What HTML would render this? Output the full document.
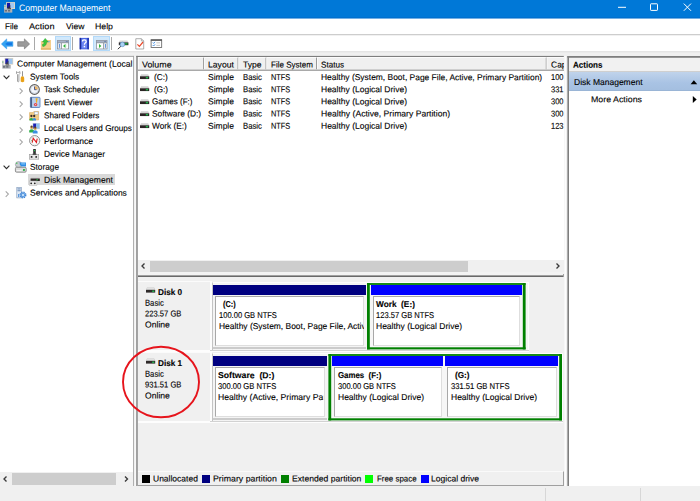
<!DOCTYPE html>
<html><head><meta charset="utf-8"><title>Computer Management</title>
<style>
*{box-sizing:border-box;margin:0;padding:0}
html,body{width:700px;height:501px;overflow:hidden;background:#f0f0f0}
body{position:relative;font-family:"Liberation Sans",sans-serif;font-size:8.5px;color:#000}
.a{position:absolute}
.t{position:absolute;white-space:pre;-webkit-text-stroke:0.12px currentColor;line-height:12px;height:12px;transform-origin:0 50%}
.b{font-weight:bold}
svg{position:absolute;overflow:visible}
</style></head><body>
<!-- title bar -->
<div class="a" style="left:0;top:0;width:700px;height:18px;background:#0078d7"></div>
<div class="a" style="left:0;top:17px;width:700px;height:1px;background:#0070cf"></div>
<div class="a" style="left:0;top:18px;width:700px;height:1px;background:#73afe4"></div>
<svg style="left:600px;top:0" width="100" height="18"><g stroke="#fff" stroke-width="1" fill="none">
<path d="M18 7.3H26"/><rect x="50.5" y="3.8" width="7" height="6.6" rx="0.6"/><path d="M83.8 3.6L91 10.8M91 3.6L83.8 10.8"/></g></svg>
<!-- menu bar -->
<div class="a" style="left:0;top:19px;width:700px;height:15px;background:#fff"></div>
<div class="a" style="left:0;top:34px;width:700px;height:1px;background:#cdcdcd"></div>
<!-- toolbar -->
<div class="a" style="left:0;top:35px;width:700px;height:16px;background:#fff;border-top:1px solid #f1f1f1"></div>
<div class="a" style="left:0;top:51px;width:700px;height:2px;background:linear-gradient(#e2e2e2,#eeeeee)"></div>
<div class="a" style="left:54.6px;top:35.7px;width:16.3px;height:15.2px;background:#d1e8fb;border:1px solid #b3dafa"></div>
<div class="a" style="left:93.1px;top:35.7px;width:16.6px;height:15.2px;background:#d1e8fb;border:1px solid #b3dafa"></div>
<div class="a" style="left:33.7px;top:37px;width:1px;height:12.7px;background:#a9a9a9"></div>
<div class="a" style="left:72.3px;top:37px;width:1px;height:12.7px;background:#a9a9a9"></div>
<div class="a" style="left:111.2px;top:37px;width:1px;height:12.7px;background:#a9a9a9"></div>
<svg style="left:0;top:35px" width="170" height="17">
<path d="M1.4 9L6.7 3.9V6.7H12.9V11.3H6.7V13.9Z" fill="#33a3f2" stroke="#2b90e4" stroke-width="0.5"/><path d="M5 9L7.4 7.6H12V10.2H7.4Z" fill="#1578e4"/>
<path d="M29.6 9L24.4 3.9V6.7H17.7V11.3H24.4V13.9Z" fill="#9b9b9b" stroke="#6e6e6e" stroke-width="0.6"/>
<path d="M40.9 6H45.4L46.2 5H51V14.5H40.9Z" fill="#f5cf8c"/><path d="M40.9 13.4H51V14.6H40.9Z" fill="#dcaa5c"/><rect x="47.6" y="6" width="2.2" height="1.3" fill="#8fb2d8"/>
<path d="M45.2 3.4L48.2 7H46.5Q46.8 10.8 42.9 11.6L42.3 9.6Q44.5 9 44.2 7H42.5Z" fill="#3cc63f" stroke="#27a32d" stroke-width="0.5"/>
<rect x="57" y="5.1" width="12" height="9.2" fill="#8a9099"/><rect x="57.6" y="5.7" width="10.8" height="1.8" fill="#a9b4c6"/><rect x="65.8" y="6" width="2" height="1" fill="#6f87ad"/><rect x="57.8" y="8.2" width="3.2" height="5.4" fill="#e4e8ee"/><rect x="59" y="9" width="0.9" height="3.8" fill="#5a8fdc"/><rect x="61.8" y="8.2" width="6.4" height="5.4" fill="#fff"/><path d="M63 10.9L65.4 8.9V12.9Z" fill="#2fb53a"/><rect x="65.4" y="9.4" width="0.8" height="3" fill="#8fd596"/>
<rect x="79.7" y="2.9" width="9.2" height="11.4" fill="#3553d8"/><rect x="79.7" y="2.9" width="1.3" height="11.4" fill="#1c2a94"/><rect x="87.6" y="2.9" width="1.3" height="11.4" fill="#2538b0"/><rect x="81.6" y="3.6" width="5.4" height="10" fill="#6d86f2"/>
<path d="M82.4 6.6Q82.4 4.8 84.3 4.8Q86.2 4.8 86.2 6.4Q86.2 7.4 85.2 8Q84.4 8.5 84.4 9.8" fill="none" stroke="#fff" stroke-width="1.25"/><rect x="83.7" y="10.8" width="1.4" height="1.5" fill="#fff"/>
<rect x="96" y="5.1" width="11.4" height="9.2" fill="#8a9099"/><rect x="96.6" y="5.7" width="10.2" height="1.8" fill="#a9b4c6"/><rect x="104.2" y="6" width="2" height="1" fill="#6f87ad"/><rect x="96.8" y="8.2" width="6.4" height="5.4" fill="#fff"/><path d="M101.4 10.9L99 8.9V12.9Z" fill="#2fb53a"/><rect x="104" y="8.2" width="2.8" height="5.4" fill="#e4e8ee"/><rect x="105" y="9" width="0.9" height="3.8" fill="#5a8fdc"/>
<path d="M119.8 5.4H127.4L128.4 7.4H118.8Z" fill="#d6d6d6"/><rect x="118.8" y="7.4" width="9.6" height="2.8" fill="#2b2626"/><rect x="124.8" y="7.9" width="2.8" height="1.8" fill="#1f9a3c"/>
<path d="M121 11.2L117.8 14.2" stroke="#3a3a3a" stroke-width="1"/><circle cx="122.4" cy="9.4" r="2.3" fill="#a9d2f5" stroke="#5b8ec4" stroke-width="0.6"/>
<path d="M135.8 3.7H141.4L143.7 6V14H135.8Z" fill="#fff" stroke="#8a8a8a" stroke-width="0.7"/><path d="M141.4 3.7V6H143.7" fill="none" stroke="#8a8a8a" stroke-width="0.6"/>
<path d="M137.4 9.4L139.4 11.4L143 7" fill="none" stroke="#ea4a2c" stroke-width="1.2"/>
<rect x="151.1" y="4.8" width="10.6" height="7.6" fill="#fff" stroke="#5d5d5d" stroke-width="0.8"/><rect x="150.8" y="4.4" width="11.2" height="1.5" fill="#5d5d5d"/>
<path d="M152.8 7.6L153.6 8.4L155 6.8M152.8 10.2L153.6 11L155 9.4" fill="none" stroke="#2e82e0" stroke-width="0.9"/><path d="M156.4 7.8H160M156.4 10.4H160" stroke="#b8b8b8" stroke-width="0.8"/>
</svg>
<svg style="left:3.8px;top:1.8px" width="12" height="11"><rect x="2.2" y="0.1" width="8.8" height="6.9" fill="#e6dcc2"/><rect x="3" y="0.9" width="3.3" height="5.3" fill="#1515a8"/><rect x="6.3" y="0.9" width="3.9" height="5.3" fill="#a4caf0"/><path d="M3 6.2L6.3 3V6.2Z" fill="#2a2a48"/><rect x="0.1" y="2.7" width="1.8" height="4.6" fill="#d2d2d2"/><rect x="0.5" y="3.7" width="0.9" height="0.9" fill="#22b14c"/><rect x="0.1" y="6.8" width="8.2" height="3.8" fill="#aeb2b8"/><rect x="0.8" y="8.2" width="2.2" height="1.2" fill="#5a5f68"/><rect x="4" y="8.2" width="2.2" height="1.2" fill="#5a5f68"/><rect x="3.4" y="6.2" width="3.6" height="1" fill="#3c3c3c"/></svg>

<!-- left pane -->
<div class="a" style="left:0;top:56px;width:133px;height:417px;background:#fff"></div>
<svg style="left:0;top:0" width="700" height="501"><rect x="0" y="55.9" width="133.9" height="0.8" fill="#8e8e8e"/><rect x="133.1" y="55.9" width="0.8" height="430.3" fill="#a0a0a0"/><rect x="134.9" y="56" width="0.8" height="430" fill="#fbfbfb"/></svg>
<div class="a" style="left:27.5px;top:173.6px;width:87.5px;height:11.8px;background:#d9d9d9"></div>
<svg style="left:3.4px;top:75.1px" width="8" height="5"><path d="M0.6 0.7L3.5 3.6L6.4 0.7" fill="none" stroke="#2b2b2b" stroke-width="1.15"/></svg>
<svg style="left:18.8px;top:87.8px" width="5" height="7"><path d="M0.7 0.4L3.4 3.1L0.7 5.8" fill="none" stroke="#a6a6a6" stroke-width="1.05"/></svg>
<svg style="left:18.8px;top:100.7px" width="5" height="7"><path d="M0.7 0.4L3.4 3.1L0.7 5.8" fill="none" stroke="#a6a6a6" stroke-width="1.05"/></svg>
<svg style="left:18.8px;top:113.6px" width="5" height="7"><path d="M0.7 0.4L3.4 3.1L0.7 5.8" fill="none" stroke="#a6a6a6" stroke-width="1.05"/></svg>
<svg style="left:18.8px;top:126.5px" width="5" height="7"><path d="M0.7 0.4L3.4 3.1L0.7 5.8" fill="none" stroke="#a6a6a6" stroke-width="1.05"/></svg>
<svg style="left:18.8px;top:139.4px" width="5" height="7"><path d="M0.7 0.4L3.4 3.1L0.7 5.8" fill="none" stroke="#a6a6a6" stroke-width="1.05"/></svg>
<svg style="left:3.4px;top:165.4px" width="8" height="5"><path d="M0.6 0.7L3.5 3.6L6.4 0.7" fill="none" stroke="#2b2b2b" stroke-width="1.15"/></svg>
<svg style="left:5.2px;top:190.6px" width="5" height="7"><path d="M0.7 0.4L3.4 3.1L0.7 5.8" fill="none" stroke="#a6a6a6" stroke-width="1.05"/></svg>
<svg style="left:1.6px;top:58.4px" width="12" height="11"><rect x="2.6" y="0" width="8.6" height="6.6" fill="#d9d2c0"/><rect x="3.3" y="0.7" width="3.2" height="5.2" fill="#1a1fb0"/><rect x="6.5" y="0.7" width="4" height="5.2" fill="#9cc4ee"/><path d="M3.3 5.9L6.5 2.5V5.9Z" fill="#3a3a5a"/><rect x="0" y="2.5" width="1.8" height="4.5" fill="#cfcfcf"/><rect x="0.4" y="3.6" width="0.9" height="0.9" fill="#22b14c"/><rect x="0.3" y="7" width="8.4" height="3.6" fill="#a9adb3"/><rect x="1" y="8.3" width="2.2" height="1.2" fill="#5a5f68"/><rect x="4.2" y="8.3" width="2.2" height="1.2" fill="#5a5f68"/><rect x="3.6" y="6.4" width="3.6" height="0.9" fill="#3c3c3c"/></svg>
<svg style="left:16.4px;top:71.2px" width="9" height="12"><path d="M0.5 0.6V2.6L1.5 3.6V10.4Q2.2 11.3 2.9 10.4V3.6L3.9 2.6V0.6L2.9 1.4H1.5Z" fill="#fff" stroke="#7d7d7d" stroke-width="0.7"/><rect x="6" y="0.2" width="0.9" height="5.4" fill="#8a8a8a"/><path d="M5.2 5.4H7.7L8.2 7V10.6Q6.45 11.8 4.7 10.6V7Z" fill="#e9a117"/></svg>
<svg style="left:28.8px;top:84.0px" width="11" height="11"><circle cx="5.5" cy="5.5" r="4.8" fill="#f4f7fb" stroke="#5f5f5f" stroke-width="1.2"/><path d="M5.5 5.5V1.5A4 4 0 0 1 9.5 5.5Z" fill="#f0b864"/><circle cx="5.5" cy="5.5" r="3.8" fill="none" stroke="#c3cee0" stroke-width="0.7"/><path d="M5.5 2.6V5.7H7.6" fill="none" stroke="#2a3a78" stroke-width="0.8"/></svg>
<svg style="left:29.6px;top:97.2px" width="11" height="11"><rect x="0.4" y="0.3" width="9.6" height="10.2" rx="0.8" fill="#a9c6ea" stroke="#4f78b8" stroke-width="0.8"/><rect x="0.4" y="0.3" width="1.6" height="10.2" fill="#4a5f86"/><rect x="2.6" y="1.2" width="6.6" height="8.4" fill="#b9d0ee"/><path d="M5.6 1.2H7.6L7 5.8H6.1Z" fill="#f2ae1c"/><circle cx="5.6" cy="7.6" r="1.7" fill="#e0474c"/><circle cx="5.6" cy="7.6" r="0.6" fill="#f6c9c9"/></svg>
<svg style="left:28.8px;top:111.0px" width="11" height="10"><path d="M0.5 1.6H4L4.8 0.5H9.6V9H0.5Z" fill="#f3cd85" stroke="#d6a552" stroke-width="0.5"/><rect x="5.6" y="1" width="3.4" height="2.2" fill="#fff" stroke="#7aa0d8" stroke-width="0.4"/><circle cx="2.4" cy="5" r="1.15" fill="#3b2f2a"/><circle cx="5.2" cy="5" r="1.15" fill="#3b2f2a"/><path d="M0.5 9.6V8Q2.4 6 4.2 8V9.6Z" fill="#2fae4a"/><path d="M3.6 9.6V8Q5.3 6 7 8V9.6Z" fill="#3d8fe0"/></svg>
<svg style="left:28.8px;top:123.2px" width="12" height="11"><rect x="3.6" y="0" width="7.4" height="6.2" fill="#cfd6e2"/><rect x="4.2" y="0.6" width="3" height="5" fill="#1c22b4"/><rect x="7.2" y="0.6" width="3.2" height="5" fill="#8fc0f0"/><circle cx="2.6" cy="4.4" r="1.5" fill="#d9ab5c"/><circle cx="6.2" cy="5.4" r="1.5" fill="#d9ab5c"/><path d="M0.2 9.4V7.6Q2.6 5 5 7.6V9.4Z" fill="#2fae4a"/><path d="M3.8 10.4V8.6Q6.2 6 8.6 8.6V10.4Z" fill="#3d8fe0"/><circle cx="2.6" cy="3.6" r="1.1" fill="#5a4030"/><circle cx="6.2" cy="4.6" r="1.1" fill="#5a4030"/></svg>
<svg style="left:28.6px;top:135.3px" width="12" height="12"><circle cx="5.7" cy="5.7" r="5.1" fill="#fff" stroke="#7f7f7f" stroke-width="0.9"/><circle cx="5.7" cy="5.7" r="3.9" fill="none" stroke="#d8d8d8" stroke-width="0.5"/><path d="M3.2 7.6L4.2 3.2L7.4 7.4L8.2 3.6" fill="none" stroke="#e0161c" stroke-width="1.1"/><path d="M2.4 5.2L3.2 6.4" stroke="#2e9e44" stroke-width="0.7"/></svg>
<svg style="left:29.2px;top:149.1px" width="10" height="11"><rect x="4.2" y="0" width="2.6" height="6" fill="#2e2e2e"/><rect x="5" y="1" width="1" height="1.3" fill="#22c04c"/><rect x="0.3" y="5.4" width="9.4" height="4.8" fill="#e6e6e6" stroke="#9a9a9a" stroke-width="0.6"/><circle cx="2.6" cy="7.9" r="0.95" fill="#222"/><circle cx="7.2" cy="7.9" r="0.95" fill="#222"/><rect x="3.6" y="4.6" width="3.8" height="1.4" fill="#555"/></svg>
<svg style="left:15.2px;top:161.2px" width="12" height="12"><ellipse cx="3.6" cy="3.6" rx="3.2" ry="3" fill="#c9cdd2" stroke="#8c9097" stroke-width="0.6"/><circle cx="1.8" cy="2.2" r="0.7" fill="#3cc24f"/><path d="M4.6 1.4H11V5.6H6.4Q4.4 4.4 4.6 1.4Z" fill="#2f8ee6"/><path d="M6 2.2H10.2V3.4H6.4Z" fill="#7cc0f6"/><rect x="0.4" y="6.3" width="10.8" height="4.9" rx="1.2" fill="#dcdcdc" stroke="#6d6d6d" stroke-width="0.7"/><rect x="1.6" y="9" width="5" height="0.9" fill="#f8f8f8"/><rect x="8" y="8" width="1.9" height="1.9" fill="#2fb24a"/></svg>
<svg style="left:29.2px;top:176.5px" width="11" height="9"><path d="M2.4 0.2H10L10.8 1.6H1.6Z" fill="#cfcfcf"/><rect x="1.6" y="1.5" width="9.2" height="2.5" fill="#2b2424"/><rect x="7.6" y="2" width="1" height="1.5" fill="#2ad04e"/><rect x="0.3" y="4" width="7.6" height="4.6" fill="#e9e9e9" stroke="#b5b5b5" stroke-width="0.5"/><circle cx="2.2" cy="6.3" r="0.9" fill="#222"/><circle cx="5.8" cy="6.3" r="0.9" fill="#222"/></svg>
<svg style="left:16.4px;top:187.4px" width="11" height="12"><rect x="0.8" y="0.3" width="4.6" height="10.6" fill="#dfe9f5" stroke="#7c96b8" stroke-width="0.6"/><rect x="1.5" y="1.5" width="3.2" height="0.9" fill="#5d7fae"/><rect x="1.5" y="3.3" width="3.2" height="0.9" fill="#5d7fae"/><circle cx="7" cy="8" r="2.6" fill="none" stroke="#3f86d8" stroke-width="1.7" stroke-dasharray="1.3 0.75"/><circle cx="7" cy="8" r="1.9" fill="#8fc1f0" stroke="#3f86d8" stroke-width="0.8"/><circle cx="7" cy="8" r="0.8" fill="#fff"/><rect x="2.2" y="7" width="1" height="3" fill="#3f86d8"/></svg>
<!-- left scrollbar -->
<div class="a" style="left:0;top:472px;width:133px;height:14px;background:#f0f0f0"></div>
<div class="a" style="left:12px;top:473px;width:104px;height:12px;background:#cdcdcd"></div>
<svg style="left:0;top:472px" width="133" height="14"><g stroke="#3a3a3a" stroke-width="1.35" fill="none"><path d="M6.5 4.5L4 7L6.5 9.5"/><path d="M125 4.5L127.5 7L125 9.5"/></g></svg>

<!-- middle pane frame -->
<div class="a" style="left:137px;top:56px;width:427px;height:430px;background:#fff"></div>
<svg style="left:0;top:0" width="700" height="501"><rect x="136.3" y="55.9" width="427.5" height="1.1" fill="#7e7e7e"/><rect x="136.3" y="55.9" width="1.4" height="430.3" fill="#7e7e7e"/><rect x="564" y="56" width="2" height="430" fill="#f7f7f7"/><rect x="565" y="56" width="0.9" height="430" fill="#fdfdfd"/></svg>
<!-- list header -->
<div class="a" style="left:138px;top:57px;width:426px;height:13px;background:#f0f0f0"></div>
<svg style="left:0;top:0" width="700" height="501"><rect x="138" y="57" width="426" height="0.8" fill="#fff"/><rect x="138" y="57" width="0.8" height="13" fill="#fff"/><rect x="203.33" y="57.6" width="0.75" height="12.4" fill="#7b7b7b"/><rect x="204.08" y="57.6" width="0.75" height="12.2" fill="#fff"/><rect x="237.63" y="57.6" width="0.75" height="12.4" fill="#7b7b7b"/><rect x="238.38" y="57.6" width="0.75" height="12.2" fill="#fff"/><rect x="265.63" y="57.6" width="0.75" height="12.4" fill="#7b7b7b"/><rect x="266.38" y="57.6" width="0.75" height="12.2" fill="#fff"/><rect x="316.23" y="57.6" width="0.75" height="12.4" fill="#7b7b7b"/><rect x="316.98" y="57.6" width="0.75" height="12.2" fill="#fff"/><rect x="545.83" y="57.6" width="0.75" height="12.4" fill="#7b7b7b"/><rect x="546.58" y="57.6" width="0.75" height="12.2" fill="#fff"/><rect x="138" y="69" width="426" height="0.8" fill="#e3e3e3"/><rect x="138" y="69.8" width="426" height="0.85" fill="#7b7b7b"/></svg>
<svg style="left:140.3px;top:74.1px" width="10" height="6"><path d="M1 0.2H8.2L9.2 2.4H0Z" fill="#d2d2d2"/><rect x="0" y="2.3" width="9.2" height="2.7" fill="#2b2424"/><rect x="5.8" y="2.9" width="2.3" height="1.5" fill="#22b14c"/><rect x="0.3" y="5" width="8.6" height="0.6" fill="#e4e4e4"/></svg>
<svg style="left:140.3px;top:86.3px" width="10" height="6"><path d="M1 0.2H8.2L9.2 2.4H0Z" fill="#d2d2d2"/><rect x="0" y="2.3" width="9.2" height="2.7" fill="#2b2424"/><rect x="5.8" y="2.9" width="2.3" height="1.5" fill="#22b14c"/><rect x="0.3" y="5" width="8.6" height="0.6" fill="#e4e4e4"/></svg>
<svg style="left:140.3px;top:98.5px" width="10" height="6"><path d="M1 0.2H8.2L9.2 2.4H0Z" fill="#d2d2d2"/><rect x="0" y="2.3" width="9.2" height="2.7" fill="#2b2424"/><rect x="5.8" y="2.9" width="2.3" height="1.5" fill="#22b14c"/><rect x="0.3" y="5" width="8.6" height="0.6" fill="#e4e4e4"/></svg>
<svg style="left:140.3px;top:110.7px" width="10" height="6"><path d="M1 0.2H8.2L9.2 2.4H0Z" fill="#d2d2d2"/><rect x="0" y="2.3" width="9.2" height="2.7" fill="#2b2424"/><rect x="5.8" y="2.9" width="2.3" height="1.5" fill="#22b14c"/><rect x="0.3" y="5" width="8.6" height="0.6" fill="#e4e4e4"/></svg>
<svg style="left:140.3px;top:122.9px" width="10" height="6"><path d="M1 0.2H8.2L9.2 2.4H0Z" fill="#d2d2d2"/><rect x="0" y="2.3" width="9.2" height="2.7" fill="#2b2424"/><rect x="5.8" y="2.9" width="2.3" height="1.5" fill="#22b14c"/><rect x="0.3" y="5" width="8.6" height="0.6" fill="#e4e4e4"/></svg>
<!-- list scrollbar -->
<div class="a" style="left:138px;top:260px;width:426px;height:12px;background:#f0f0f0"></div>
<div class="a" style="left:150px;top:260.5px;width:317.5px;height:11px;background:#cdcdcd"></div>
<svg style="left:138px;top:260px" width="426" height="12"><g stroke="#3a3a3a" stroke-width="1.35" fill="none"><path d="M6.5 3.5L4 6L6.5 8.5"/><path d="M418.5 3.5L421 6L418.5 8.5"/></g></svg>
<!-- splitter -->
<div class="a" style="left:138px;top:272px;width:426px;height:5px;background:#f3f3f3"></div>
<div class="a" style="left:138px;top:275px;width:426px;height:1px;background:#a0a0a0"></div>
<div class="a" style="left:138px;top:276px;width:426px;height:1px;background:#696969"></div>
<div class="a" style="left:563px;top:273.5px;width:1px;height:3px;background:#a0a0a0"></div>
<!-- middle bottom -->
<div class="a" style="left:138px;top:277px;width:426px;height:210px;background:#f0f0f0"></div>
<div class="a" style="left:138px;top:281px;width:74px;height:70px;background:#f0f0f0;border-top:1px solid #fbfbfb;border-right:2px solid #fdfdfd;border-bottom:1px solid #fdfdfd"></div>
<div class="a" style="left:212px;top:282px;width:316.6px;height:69px;background:#f4f4f4;border-left:1px solid #c4c4c4;border-top:1px solid #fdfdfd;border-right:1px solid #fdfdfd"></div>
<div class="a" style="left:210px;top:350px;width:318.6px;height:1px;background:#d2d2d2"></div>
<div class="a" style="left:138px;top:351px;width:390.6px;height:1px;background:#fdfdfd"></div>
<svg style="left:146px;top:287.6px" width="10" height="6"><path d="M1 -0.6H8.2L9.2 2H0Z" fill="#c6c6c6"/><path d="M1.3 -0.2H7.9L8.5 1.2H0.7Z" fill="#e2e2e2"/><rect x="0" y="1.9" width="9.2" height="2.7" fill="#2f2a2a"/><rect x="6.2" y="2.5" width="2.1" height="1.5" fill="#22b14c"/></svg>
<div class="a" style="left:138px;top:352px;width:74px;height:70px;background:#f0f0f0;border-top:1px solid #fbfbfb;border-right:2px solid #fdfdfd;border-bottom:1px solid #fdfdfd"></div>
<div class="a" style="left:212px;top:353px;width:351.4px;height:69px;background:#f4f4f4;border-left:1px solid #c4c4c4;border-top:1px solid #fdfdfd;border-right:1px solid #fdfdfd"></div>
<div class="a" style="left:210px;top:421px;width:353.4px;height:1px;background:#d2d2d2"></div>
<div class="a" style="left:138px;top:422px;width:425.4px;height:1px;background:#fdfdfd"></div>
<svg style="left:146px;top:358.6px" width="10" height="6"><path d="M1 -0.6H8.2L9.2 2H0Z" fill="#c6c6c6"/><path d="M1.3 -0.2H7.9L8.5 1.2H0.7Z" fill="#e2e2e2"/><rect x="0" y="1.9" width="9.2" height="2.7" fill="#2f2a2a"/><rect x="6.2" y="2.5" width="2.1" height="1.5" fill="#22b14c"/></svg>
<div class="a" style="left:213.0px;top:285.0px;width:153.0px;height:9.7px;background:#000080"></div>
<div class="a" style="left:214.8px;top:295.8px;width:149.6px;height:50.6px;background:#fff;border:1px solid #a8a8a8;border-right-color:#dedede;border-bottom-color:#dedede"></div>
<div class="a" style="left:213.0px;top:347.3px;width:153.0px;height:1.6px;background:#cbcbcb"></div>
<svg style="left:0;top:0" width="700" height="501"><rect x="367.0" y="283.1" width="158.6" height="66.3" fill="#f6f6f6"/><g fill="#008000"><rect x="367.0" y="283.1" width="2.8" height="66.3"/><rect x="522.8" y="283.1" width="2.8" height="66.3"/><rect x="367.0" y="283.1" width="158.6" height="1.8"/><rect x="367.0" y="347.3" width="158.6" height="2.1"/></g></svg>
<div class="a" style="left:371.0px;top:285.0px;width:150.6px;height:9.7px;background:#0000ff"></div>
<div class="a" style="left:372.8px;top:295.8px;width:147.2px;height:50.6px;background:#fff;border:1px solid #a8a8a8;border-right-color:#dedede;border-bottom-color:#dedede"></div>
<div class="a" style="left:213.0px;top:356.0px;width:114.0px;height:9.7px;background:#000080"></div>
<div class="a" style="left:214.8px;top:366.8px;width:110.6px;height:50.6px;background:#fff;border:1px solid #a8a8a8;border-right-color:#dedede;border-bottom-color:#dedede"></div>
<div class="a" style="left:213.0px;top:418.3px;width:114.0px;height:1.6px;background:#cbcbcb"></div>
<svg style="left:0;top:0" width="700" height="501"><rect x="328.4" y="354.1" width="233.6" height="66.3" fill="#f6f6f6"/><g fill="#008000"><rect x="328.4" y="354.1" width="2.8" height="66.3"/><rect x="559.2" y="354.1" width="2.8" height="66.3"/><rect x="328.4" y="354.1" width="233.6" height="1.8"/><rect x="328.4" y="418.3" width="233.6" height="2.1"/></g></svg>
<div class="a" style="left:332.2px;top:356.0px;width:111.0px;height:9.7px;background:#0000ff"></div>
<div class="a" style="left:334.0px;top:366.8px;width:107.6px;height:50.6px;background:#fff;border:1px solid #a8a8a8;border-right-color:#dedede;border-bottom-color:#dedede"></div>
<div class="a" style="left:445.4px;top:356.0px;width:112.8px;height:9.7px;background:#0000ff"></div>
<div class="a" style="left:447.2px;top:366.8px;width:109.4px;height:50.6px;background:#fff;border:1px solid #a8a8a8;border-right-color:#dedede;border-bottom-color:#dedede"></div>
<!-- legend -->
<div class="a" style="left:138px;top:471px;width:426px;height:15px;border-top:1px solid #fafafa;border-right:1px solid #a0a0a0;border-bottom:1px solid #a0a0a0"></div>
<div class="a" style="left:141.5px;top:474.5px;width:8px;height:8.5px;background:#000"></div>
<div class="a" style="left:202px;top:474.5px;width:8px;height:8.5px;background:#000080"></div>
<div class="a" style="left:281px;top:474.5px;width:8px;height:8.5px;background:#008000"></div>
<div class="a" style="left:365px;top:474.5px;width:8px;height:8.5px;background:#00ff00"></div>
<div class="a" style="left:420.5px;top:474.5px;width:8px;height:8.5px;background:#0000ff"></div>

<!-- right pane -->
<div class="a" style="left:568px;top:57px;width:132px;height:429px;background:#fff"></div>
<svg style="left:0;top:0" width="700" height="501"><rect x="567.4" y="56" width="132.6" height="1.8" fill="#7e7e7e"/><rect x="567.4" y="56" width="1.6" height="430" fill="#7e7e7e"/></svg>
<div class="a" style="left:569px;top:58px;width:131px;height:13px;background:#f1f1f1"></div>
<div class="a" style="left:569px;top:71px;width:131px;height:1px;background:#cfcfcf"></div>
<div class="a" style="left:569px;top:72px;width:131px;height:19px;background:linear-gradient(#c0d3eb,#a9c3e4 60%,#a4bfe0);border-bottom:1px solid #9ab5d6"></div>
<svg style="left:688px;top:76px" width="12" height="30"><path d="M2.6 8.3L5.9 4.3L9.2 8.3Z" fill="#000"/><path d="M4.8 19.9L8.7 23.4L4.8 26.9Z" fill="#000"/></svg>

<!-- status bar -->
<div class="a" style="left:0;top:486px;width:700px;height:15px;background:#f0f0f0"></div>
<div class="a" style="left:545px;top:488px;width:1px;height:13px;background:#d7d7d7"></div>
<div class="a" style="left:640px;top:488px;width:1px;height:13px;background:#d7d7d7"></div>

<div class="t" style="left:18.8px;top:2px;font-size:9.3px;color:#fff;-webkit-text-stroke:0;transform:translateY(0.00px) rotate(.05deg) scaleX(0.935)">Computer Management</div>
<div class="t" style="left:5.0px;top:20px;transform:translateY(0.20px) rotate(.05deg) scaleX(0.955)">File</div>
<div class="t" style="left:29.4px;top:20px;transform:translateY(0.20px) rotate(.05deg) scaleX(1.079)">Action</div>
<div class="t" style="left:65.9px;top:20px;transform:translateY(0.20px) rotate(.05deg) scaleX(1.011)">View</div>
<div class="t" style="left:95.4px;top:20px;transform:translateY(0.20px) rotate(.05deg) scaleX(1.029)">Help</div>
<div class="t" style="left:17.0px;top:58px;transform:translateY(-0.45px) rotate(.05deg) scaleX(1.005)">Computer Management (Local</div>
<div class="t" style="left:29.9px;top:70px;transform:translateY(0.45px) rotate(.05deg) scaleX(0.978)">System Tools</div>
<div class="t" style="left:43.9px;top:83px;transform:translateY(0.35px) rotate(.05deg) scaleX(0.953)">Task Scheduler</div>
<div class="t" style="left:43.9px;top:96px;transform:translateY(0.25px) rotate(.05deg) scaleX(0.971)">Event Viewer</div>
<div class="t" style="left:43.9px;top:109px;transform:translateY(0.15px) rotate(.05deg) scaleX(0.953)">Shared Folders</div>
<div class="t" style="left:43.9px;top:122px;transform:translateY(0.05px) rotate(.05deg) scaleX(0.959)">Local Users and Groups</div>
<div class="t" style="left:43.9px;top:135px;transform:translateY(-0.05px) rotate(.05deg) scaleX(1.005)">Performance</div>
<div class="t" style="left:43.9px;top:148px;transform:translateY(-0.15px) rotate(.05deg) scaleX(0.987)">Device Manager</div>
<div class="t" style="left:29.9px;top:161px;transform:translateY(-0.25px) rotate(.05deg) scaleX(0.977)">Storage</div>
<div class="t" style="left:43.9px;top:174px;transform:translateY(-0.35px) rotate(.05deg) scaleX(1.005)">Disk Management</div>
<div class="t" style="left:29.9px;top:187px;transform:translateY(-0.45px) rotate(.05deg)">Services and Applications</div>
<div class="t" style="left:142.2px;top:58px;transform:translateY(0.40px) rotate(.05deg) scaleX(1.043)">Volume</div>
<div class="t" style="left:208.2px;top:58px;transform:translateY(0.40px) rotate(.05deg) scaleX(1.014)">Layout</div>
<div class="t" style="left:242.5px;top:58px;transform:translateY(0.40px) rotate(.05deg)">Type</div>
<div class="t" style="left:270.8px;top:58px;transform:translateY(0.40px) rotate(.05deg) scaleX(0.943)">File System</div>
<div class="t" style="left:321.3px;top:58px;transform:translateY(0.40px) rotate(.05deg) scaleX(0.954)">Status</div>
<div class="t" style="left:551.3px;top:58px;transform:translateY(0.40px) rotate(.05deg);width:12.7px;overflow:hidden">Cap</div>
<div class="t" style="left:153.9px;top:71px;transform:translateY(0.05px) rotate(.05deg) scaleX(0.980)">(C:)</div>
<div class="t" style="left:208.2px;top:71px;transform:translateY(0.05px) rotate(.05deg)">Simple</div>
<div class="t" style="left:242.5px;top:71px;transform:translateY(0.05px) rotate(.05deg) scaleX(0.913)">Basic</div>
<div class="t" style="left:270.8px;top:71px;transform:translateY(0.05px) rotate(.05deg) scaleX(0.869)">NTFS</div>
<div class="t" style="left:321.3px;top:71px;transform:translateY(0.05px) rotate(.05deg) scaleX(0.992)">Healthy (System, Boot, Page File, Active, Primary Partition)</div>
<div class="t" style="left:551.2px;top:71px;transform:translateY(0.05px) rotate(.05deg) scaleX(0.881)">100</div>
<div class="t" style="left:153.9px;top:83px;transform:translateY(0.20px) rotate(.05deg) scaleX(0.949)">(G:)</div>
<div class="t" style="left:208.2px;top:83px;transform:translateY(0.20px) rotate(.05deg)">Simple</div>
<div class="t" style="left:242.5px;top:83px;transform:translateY(0.20px) rotate(.05deg) scaleX(0.913)">Basic</div>
<div class="t" style="left:270.8px;top:83px;transform:translateY(0.20px) rotate(.05deg) scaleX(0.869)">NTFS</div>
<div class="t" style="left:321.3px;top:83px;transform:translateY(0.20px) rotate(.05deg)">Healthy (Logical Drive)</div>
<div class="t" style="left:551.2px;top:83px;transform:translateY(0.20px) rotate(.05deg) scaleX(0.881)">331</div>
<div class="t" style="left:152.2px;top:95px;transform:translateY(0.35px) rotate(.05deg) scaleX(0.942)">Games (F:)</div>
<div class="t" style="left:208.2px;top:95px;transform:translateY(0.35px) rotate(.05deg)">Simple</div>
<div class="t" style="left:242.5px;top:95px;transform:translateY(0.35px) rotate(.05deg) scaleX(0.913)">Basic</div>
<div class="t" style="left:270.8px;top:95px;transform:translateY(0.35px) rotate(.05deg) scaleX(0.869)">NTFS</div>
<div class="t" style="left:321.3px;top:95px;transform:translateY(0.35px) rotate(.05deg)">Healthy (Logical Drive)</div>
<div class="t" style="left:551.2px;top:95px;transform:translateY(0.35px) rotate(.05deg) scaleX(0.881)">300</div>
<div class="t" style="left:152.2px;top:107px;transform:translateY(0.50px) rotate(.05deg) scaleX(0.980)">Software (D:)</div>
<div class="t" style="left:208.2px;top:107px;transform:translateY(0.50px) rotate(.05deg)">Simple</div>
<div class="t" style="left:242.5px;top:107px;transform:translateY(0.50px) rotate(.05deg) scaleX(0.913)">Basic</div>
<div class="t" style="left:270.8px;top:107px;transform:translateY(0.50px) rotate(.05deg) scaleX(0.869)">NTFS</div>
<div class="t" style="left:321.3px;top:107px;transform:translateY(0.50px) rotate(.05deg) scaleX(1.012)">Healthy (Active, Primary Partition)</div>
<div class="t" style="left:551.2px;top:107px;transform:translateY(0.50px) rotate(.05deg) scaleX(0.881)">300</div>
<div class="t" style="left:152.2px;top:120px;transform:translateY(-0.35px) rotate(.05deg) scaleX(0.974)">Work (E:)</div>
<div class="t" style="left:208.2px;top:120px;transform:translateY(-0.35px) rotate(.05deg)">Simple</div>
<div class="t" style="left:242.5px;top:120px;transform:translateY(-0.35px) rotate(.05deg) scaleX(0.913)">Basic</div>
<div class="t" style="left:270.8px;top:120px;transform:translateY(-0.35px) rotate(.05deg) scaleX(0.869)">NTFS</div>
<div class="t" style="left:321.3px;top:120px;transform:translateY(-0.35px) rotate(.05deg)">Healthy (Logical Drive)</div>
<div class="t" style="left:551.2px;top:120px;transform:translateY(-0.35px) rotate(.05deg) scaleX(0.881)">123</div>
<div class="t b" style="left:572.7px;top:59px;transform:translateY(-0.20px) rotate(.05deg) scaleX(0.943)">Actions</div>
<div class="t" style="left:573.8px;top:76px;transform:translateY(-0.10px) rotate(.05deg)">Disk Management</div>
<div class="t" style="left:590.8px;top:93px;transform:translateY(0.30px) rotate(.05deg) scaleX(1.038)">More Actions</div>
<div class="t b" style="left:157.6px;top:286px;transform:translateY(-0.10px) rotate(.05deg) scaleX(0.966)">Disk 0</div>
<div class="t" style="left:144.5px;top:297px;transform:translateY(-0.30px) rotate(.05deg) scaleX(0.904)">Basic</div>
<div class="t" style="left:144.5px;top:307px;transform:translateY(0.40px) rotate(.05deg) scaleX(0.895)">223.57 GB</div>
<div class="t" style="left:144.5px;top:318px;transform:translateY(0.40px) rotate(.05deg) scaleX(1.013)">Online</div>
<div class="t b" style="left:157.6px;top:357px;transform:translateY(-0.10px) rotate(.05deg) scaleX(0.966)">Disk 1</div>
<div class="t" style="left:144.5px;top:368px;transform:translateY(-0.30px) rotate(.05deg) scaleX(0.904)">Basic</div>
<div class="t" style="left:144.5px;top:378px;transform:translateY(0.40px) rotate(.05deg) scaleX(0.895)">931.51 GB</div>
<div class="t" style="left:144.5px;top:389px;transform:translateY(0.40px) rotate(.05deg) scaleX(1.013)">Online</div>
<div class="t b" style="left:222.6px;top:298px;transform:translateY(0.10px) rotate(.05deg) scaleX(0.867)">(C:)</div>
<div class="t" style="left:218.5px;top:309px;transform:translateY(0.00px) rotate(.05deg) scaleX(0.888)">100.00 GB NTFS</div>
<div class="t" style="left:218.5px;top:320px;transform:translateY(-0.10px) rotate(.05deg) scaleX(0.992);width:145.7px;overflow:hidden">Healthy (System, Boot, Page File, Active, Primary Partition)</div>
<div class="t b" style="left:375.9px;top:298px;transform:translateY(0.10px) rotate(.05deg) scaleX(0.973)">Work  (E:)</div>
<div class="t" style="left:375.9px;top:309px;transform:translateY(0.00px) rotate(.05deg) scaleX(0.891)">123.57 GB NTFS</div>
<div class="t" style="left:375.9px;top:320px;transform:translateY(-0.10px) rotate(.05deg)">Healthy (Logical Drive)</div>
<div class="t b" style="left:218.1px;top:369px;transform:translateY(0.10px) rotate(.05deg) scaleX(1.019)">Software  (D:)</div>
<div class="t" style="left:218.1px;top:380px;transform:translateY(0.00px) rotate(.05deg) scaleX(0.894)">300.00 GB NTFS</div>
<div class="t" style="left:218.1px;top:391px;transform:translateY(-0.10px) rotate(.05deg) scaleX(1.012);width:104.0px;overflow:hidden">Healthy (Active, Primary Partition)</div>
<div class="t b" style="left:337.5px;top:369px;transform:translateY(0.10px) rotate(.05deg) scaleX(0.926)">Games  (F:)</div>
<div class="t" style="left:337.5px;top:380px;transform:translateY(0.00px) rotate(.05deg) scaleX(0.888)">300.00 GB NTFS</div>
<div class="t" style="left:337.5px;top:391px;transform:translateY(-0.10px) rotate(.05deg)">Healthy (Logical Drive)</div>
<div class="t b" style="left:454.9px;top:369px;transform:translateY(0.10px) rotate(.05deg) scaleX(0.959)">(G:)</div>
<div class="t" style="left:450.5px;top:380px;transform:translateY(0.00px) rotate(.05deg) scaleX(0.897)">331.51 GB NTFS</div>
<div class="t" style="left:450.5px;top:391px;transform:translateY(-0.10px) rotate(.05deg)">Healthy (Logical Drive)</div>
<div class="t" style="left:153.0px;top:472px;transform:translateY(0.40px) rotate(.05deg)">Unallocated</div>
<div class="t" style="left:212.9px;top:472px;transform:translateY(0.40px) rotate(.05deg) scaleX(1.032)">Primary partition</div>
<div class="t" style="left:291.9px;top:472px;transform:translateY(0.40px) rotate(.05deg) scaleX(1.013)">Extended partition</div>
<div class="t" style="left:376.5px;top:472px;transform:translateY(0.40px) rotate(.05deg) scaleX(0.931)">Free space</div>
<div class="t" style="left:431.3px;top:472px;transform:translateY(0.40px) rotate(.05deg) scaleX(1.007)">Logical drive</div>
<!-- annotation -->
<svg style="left:0;top:0" width="700" height="501"><ellipse cx="161" cy="382" rx="38" ry="35.3" fill="none" stroke="#e6141c" stroke-width="1.9"/></svg>

</body></html>
